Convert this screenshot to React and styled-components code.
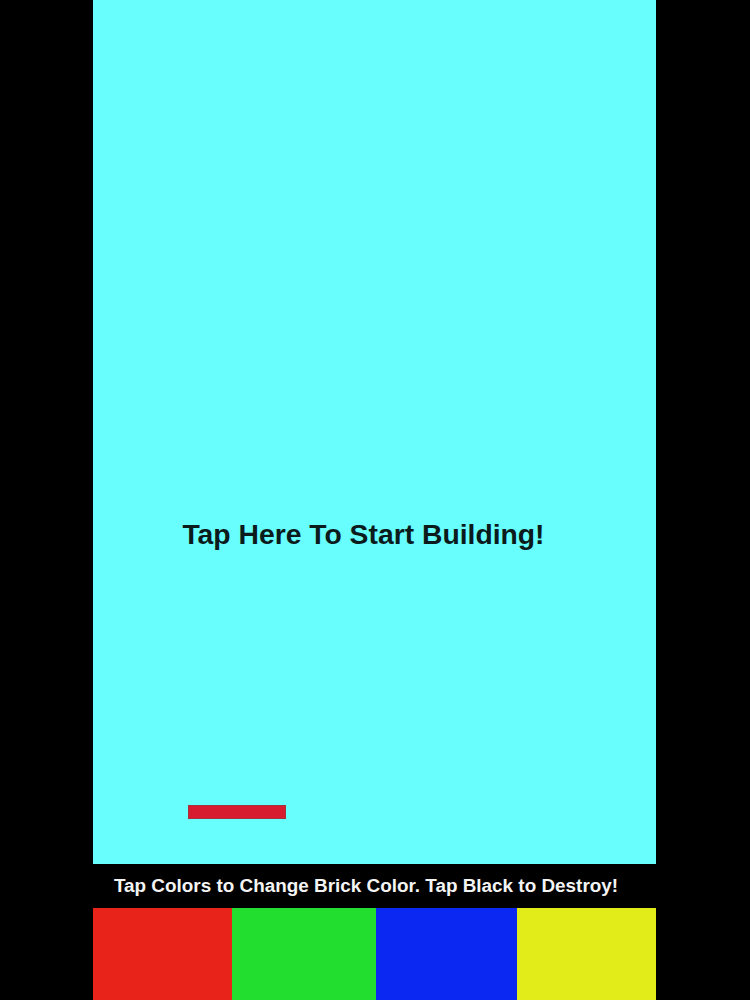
import React, { useState } from 'react';
import styled, { createGlobalStyle } from 'styled-components';

const GlobalStyle = createGlobalStyle`
    html, body {
        margin: 0;
        padding: 0;
        background: #000;
    }
`

const Screen = styled.div`
    width: 750px;
    height: 1000px;
    background-color: #000;
    display: flex;
    padding-left: 93px;
    box-sizing: border-box;
    font-family: "Liberation Sans", Arial, sans-serif;
`

const Board = styled.div`
    width: 563px;
    height: 100%;
    display: flex;
    flex-direction: column;
`

const PlayArea = styled.div`
    position: relative;
    height: 864px;
    background-color: #68fefe;
    display: flex;
    justify-content: center;
    padding: 517px 22px 0 0;
    box-sizing: border-box;
    cursor: pointer;
`

const StartText = styled.div`
    font-size: 28.3px;
    font-weight: bold;
    color: #0b1b1c;
    line-height: 34px;
    height: 34px;
`

const Brick = styled.div`
    position: absolute;
    left: ${({x}) => x}px;
    top: ${({y}) => y}px;
    width: 98px;
    height: 14px;
    background-color: ${({color}) => color};
    border: 1px solid #a8303a;
    box-sizing: border-box;
`

const HintBar = styled.div`
    height: 44px;
    display: flex;
    align-items: center;
    justify-content: center;
    padding-right: 17px;
    color: #f4f4f4;
    font-size: 18.9px;
    font-weight: bold;
`

const Palette = styled.div`
    flex: 1;
    display: flex;
`

const Swatch = styled.div`
    width: ${({w}) => w}px;
    background-color: ${({color}) => color};
    cursor: pointer;
`

const swatches = [
    {color: '#e8241a', w: 139},
    {color: '#22de2e', w: 144},
    {color: '#0b28f2', w: 141},
    {color: '#e1ec19', w: 139},
]

const App = () => {
    const [brickColor, setBrickColor] = useState('#d81c2f');

    return (
        <Screen>
            <GlobalStyle />
            <Board>
                <PlayArea>
                    <StartText>Tap Here To Start Building!</StartText>
                    <Brick x={95} y={805} color={brickColor} />
                </PlayArea>
                <HintBar>Tap Colors to Change Brick Color. Tap Black to Destroy!</HintBar>
                <Palette>
                    {swatches.map(s => (
                        <Swatch key={s.color} color={s.color} w={s.w} onClick={() => setBrickColor(s.color)} />
                    ))}
                </Palette>
            </Board>
        </Screen>
    )
}

export default App;
